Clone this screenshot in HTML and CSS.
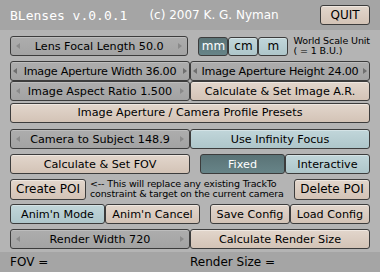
FILE: index.html
```html
<!DOCTYPE html>
<html>

<head>
    <meta charset="UTF-8">
    <link rel="stylesheet" href="styles.css">
    <title>BLenses</title>
</head>

<body>
    <div class="header">
        <div class="title">BLenses v.0.0.1</div>
        <div class="copyright">(c) 2007 K. G. Nyman</div>
        <div class="button tan quit">QUIT</div>
    </div>

    <div class="panel">
        <div class="row">
            <div class="num half">Lens Focal Length 50.0</div>
            <div class="units">
                <div class="button blue selected">mm</div>
                <div class="button blue">cm</div>
                <div class="button blue">m</div>
            </div>
            <div class="unitLabel">World Scale Unit<br>( = 1 B.U.)</div>
        </div>

        <div class="block">
            <div class="row tight">
                <div class="num half squeeze">Image Aperture Width 36.00</div>
                <div class="num half squeeze">Image Aperture Height 24.00</div>
            </div>
            <div class="row tight">
                <div class="num half">Image Aspect Ratio 1.500</div>
                <div class="button tan half">Calculate &amp; Set Image A.R.</div>
            </div>
            <div class="row tight">
                <div class="button tan full">Image Aperture / Camera Profile Presets</div>
            </div>
        </div>

        <div class="row">
            <div class="num half">Camera to Subject 148.9</div>
            <div class="button blue half">Use Infinity Focus</div>
        </div>

        <div class="row">
            <div class="button tan half">Calculate &amp; Set FOV</div>
            <div class="toggle">
                <div class="button blue selected">Fixed</div>
                <div class="button blue">Interactive</div>
            </div>
        </div>

        <div class="row">
            <div class="button tan poi">Create POI</div>
            <div class="note">&lt;-- This will replace any existing TrackTo<br>constraint &amp; target on the current camera</div>
            <div class="button tan poi delete">Delete POI</div>
        </div>

        <div class="row">
            <div class="button blue anim">Anim'n Mode</div>
            <div class="button tan anim">Anim'n Cancel</div>
            <div class="config">
                <div class="button tan">Save Config</div>
                <div class="button tan">Load Config</div>
            </div>
        </div>

        <div class="row">
            <div class="num half">Render Width 720</div>
            <div class="button tan half">Calculate Render Size</div>
        </div>
    </div>

    <div class="footer">
        <div class="result">FOV =</div>
        <div class="result">Render Size =</div>
    </div>
</body>

</html>
```

FILE: styles.css
```css
body {
    margin: 0;
    width: 380px;
    height: 272px;
    background: #b4b4b4;
    font-family: "DejaVu Sans", sans-serif;
    font-size: 11.2px;
    color: black;
    overflow: hidden;
}

.header {
    height: 30px;
    background: #a5a5a5;
    display: flex;
    align-items: center;
    padding: 0 10px;
    color: white;
}

.title {
    font-family: "DejaVu Sans Mono", monospace;
    font-size: 13px;
    margin-right: 22px;
}

.copyright {
    font-size: 12px;
    flex: 1;
}

.quit {
    width: 50px;
    height: 20px;
    font-size: 12px;
}

.panel {
    padding: 6px 10px 0 10px;
    height: 216px;
}

.row {
    display: flex;
    align-items: center;
    height: 20px;
    margin-bottom: 5px;
}

.row.tight {
    margin-bottom: 0;
}

.block {
    margin-bottom: 6px;
}

.block .row:last-child {
    height: 21px;
    margin-top: 1px;
}

.half {
    width: 180px;
}

.full {
    width: 360px;
}

.button,
.num {
    box-sizing: border-box;
    height: 20px;
    display: flex;
    align-items: center;
    justify-content: center;
    border: solid 1px #3c3c3c;
    border-radius: 3px;
    white-space: nowrap;
    color: black;
}

.num {
    position: relative;
    background: linear-gradient(#adadad, #a3a3a3);
    box-shadow: inset 0 1px 0 #bdbdbd;
}

.num::before,
.num::after {
    content: "";
    position: absolute;
    top: 6px;
    border-top: 3px solid transparent;
    border-bottom: 3px solid transparent;
}

.num::before {
    left: 5px;
    border-right: 4px solid #8a8a8a;
}

.num::after {
    right: 5px;
    border-left: 4px solid #8a8a8a;
}

.num.squeeze {
    letter-spacing: -0.25px;
}

.num.squeeze::before {
    left: 2px;
    border-right-color: #6e6e6e;
}

.num.squeeze::after {
    right: 2px;
    border-left-color: #6e6e6e;
}

.tan {
    background: linear-gradient(#e2d6cc, #d3c3b6);
    box-shadow: inset 0 1px 0 #efe7e0;
}

.blue {
    background: linear-gradient(#c1d6da, #aec6ca);
    box-shadow: inset 0 1px 0 #d4e3e6;
}

.blue.selected {
    background: linear-gradient(#5a7376, #678488);
    box-shadow: none;
    color: white;
}

.units {
    display: flex;
    margin-left: 10px;
}

.units .button {
    width: 30px;
    height: 19px;
    font-size: 12px;
}

.unitLabel {
    font-size: 9.5px;
    line-height: 10px;
    margin-left: 5px;
    white-space: nowrap;
    letter-spacing: -0.1px;
}

.toggle {
    display: flex;
    margin-left: 10px;
}

.toggle .button {
    width: 85px;
}

.poi {
    width: 76px;
    height: 21px;
    font-size: 12px;
}

.note {
    flex: 1;
    font-size: 9.5px;
    line-height: 10px;
    margin-left: 4px;
    white-space: nowrap;
    letter-spacing: -0.15px;
    overflow: hidden;
}

.anim {
    width: 95px;
}

.config {
    display: flex;
    margin-left: 10px;
}

.config .button {
    width: 80px;
}

.footer {
    height: 20px;
    background: #a5a5a5;
    display: flex;
    align-items: center;
    padding: 0 10px;
    font-size: 12px;
}

.result {
    width: 190px;
}
```
